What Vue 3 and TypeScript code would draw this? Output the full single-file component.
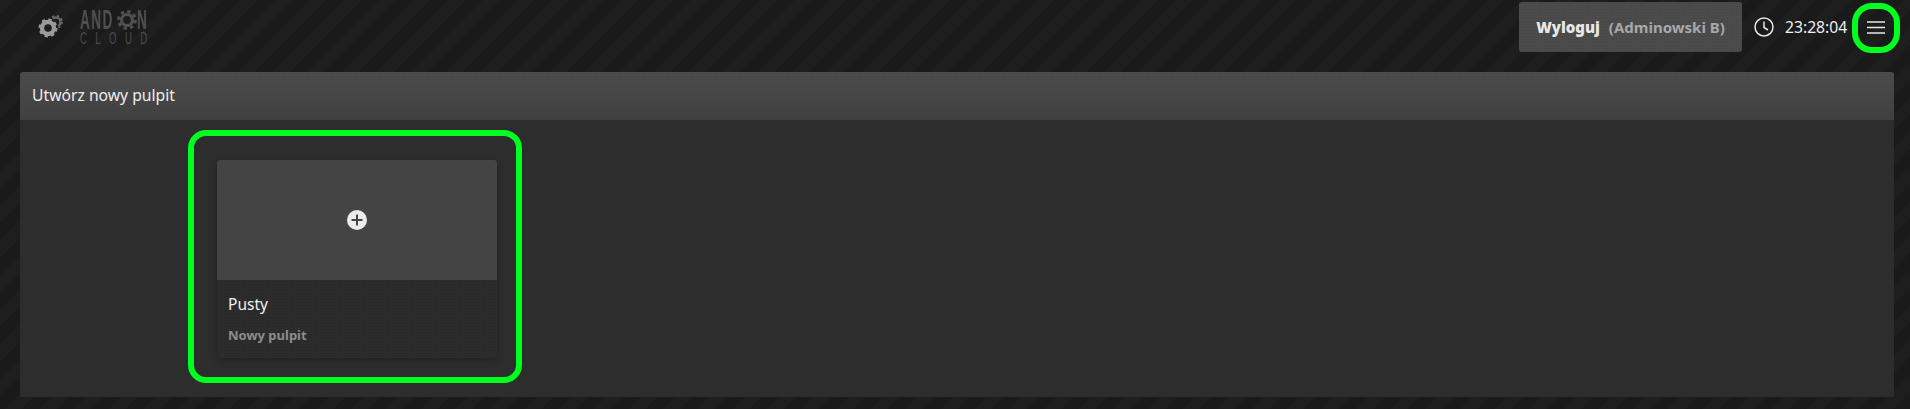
<template>
  <div class="page">
    <header class="topbar">
      <div class="brand">
        <svg class="gears" viewBox="0 0 26 26" width="26" height="26">
          <g fill="none" stroke="#666">
            <circle cx="18" cy="8" r="4.500" stroke-width="2.500" />
            <circle cx="18" cy="8" r="6.200" stroke-width="1.600" stroke-dasharray="2.400 2.470" />
          </g>
          <circle cx="10" cy="14" r="10.500" fill="#1c1c1c" />
          <g fill="none" stroke="#9a9a9a">
            <circle cx="10" cy="14" r="6" stroke-width="4.400" />
            <circle cx="10" cy="14" r="8.300" stroke-width="2.400" stroke-dasharray="3.260 3.260" />
          </g>
        </svg>
        <div class="logo">
          <div class="logo-top">
            <span class="logo-word logo-and">AND</span>
            <svg class="logo-gear" viewBox="0 0 20 20" width="20" height="20">
              <circle cx="10" cy="10" r="5.500" fill="none" stroke="#505050" stroke-width="3.200" />
              <circle cx="10" cy="10" r="8.400" fill="none" stroke="#505050" stroke-width="3" stroke-dasharray="3.300 3.300" />
            </svg>
            <span class="logo-word logo-n">N</span>
          </div>
          <div class="logo-sub">CLOUD</div>
        </div>
      </div>
      <div class="actions">
        <button class="logout" type="button">
          <b>Wyloguj</b>
          <span>({{ user }})</span>
        </button>
        <svg class="clock" viewBox="0 0 20 20" width="20" height="20">
          <circle cx="10" cy="10" r="9" fill="none" stroke="#e6e6e6" stroke-width="1.500" />
          <path d="M10 4.500V10.500L14 13" fill="none" stroke="#e6e6e6" stroke-width="1.500" />
        </svg>
        <span class="time">{{ time }}</span>
        <div class="menu">
          <svg viewBox="0 0 18 13" width="18" height="13">
            <path d="M0 1h18M0 6.500h18M0 12h18" stroke="#e6e6e6" stroke-width="1.600" />
          </svg>
          <span class="ring ring-menu"></span>
        </div>
      </div>
    </header>

    <section class="panel">
      <div class="panel-head">Utwórz nowy pulpit</div>
      <div class="panel-body">
        <article v-for="tpl in templates" :key="tpl.title" class="card">
          <span class="ring ring-card"></span>
          <div class="thumb">
            <svg viewBox="0 0 20 20" width="20" height="20">
              <circle cx="10" cy="10" r="10" fill="#ececec" />
              <path d="M10 4.500v11M4.500 10h11" stroke="#444" stroke-width="2" />
            </svg>
          </div>
          <div class="card-body">
            <div class="card-title">{{ tpl.title }}</div>
            <div class="card-sub">{{ tpl.sub }}</div>
          </div>
        </article>
      </div>
    </section>
  </div>
</template>

<script setup lang="ts">
const user = 'Adminowski B'
const time = '23:28:04'
const templates = [{ title: 'Pusty', sub: 'Nowy pulpit' }]
</script>

<style>
html,
body {
  margin: 0;
  background: #1a1a1a;
}
</style>

<style scoped>
.page {
  height: 409px;
  overflow: hidden;
  font-family: "Noto Sans", "Open Sans", sans-serif;
  color: #eee;
  background: repeating-linear-gradient(-45deg, #1a1a1a 0 12px, #1e1e1e 12.500px 24px, #1a1a1a 24.500px);
}

.topbar {
  height: 72px;
  padding-right: 10px;
  display: flex;
  justify-content: space-between;
  align-items: flex-start;
}

.brand {
  display: flex;
  align-items: flex-start;
  padding: 14px 0 0 38px;
  gap: 16px;
}

.logo {
  width: 70px;
  margin-top: -4px;
}

.logo-top {
  display: flex;
  align-items: center;
  height: 20px;
}

.logo-word {
  font-family: "Liberation Sans", sans-serif;
  font-weight: 700;
  font-size: 27px;
  line-height: 20px;
  letter-spacing: 3px;
  color: #505050;
  display: inline-block;
  transform: scaleX(0.5);
  transform-origin: left center;
}

.logo-and {
  width: 37px;
}

.logo-n {
  width: 11px;
}

.logo-gear {
  flex: none;
}

.logo-sub {
  font-family: "Liberation Sans", sans-serif;
  font-size: 16px;
  letter-spacing: 14px;
  color: #4c4c4c;
  transform: scaleX(0.6);
  transform-origin: left center;
  white-space: nowrap;
  line-height: 16px;
  margin-top: 1px;
}

.actions {
  display: flex;
  align-items: center;
  height: 54px;
}

.logout {
  width: 223px;
  height: 50px;
  border: 0;
  border-radius: 3px;
  background: radial-gradient(#444 0.6px, transparent 0.7px) 0 0 / 3px 3px, #4b4b4b;
  color: #e8e8e8;
  font: 700 15px "Noto Sans", sans-serif;
  display: flex;
  justify-content: center;
  align-items: center;
  gap: 9px;
}

.logout span {
  color: #a8a8a8;
}

.clock {
  margin-left: 12px;
}

.time {
  margin-left: 11px;
  font-size: 15.700px;
  width: 67px;
}

.menu {
  position: relative;
  width: 48px;
  height: 50px;
  display: flex;
  justify-content: center;
  align-items: center;
}

.ring {
  position: absolute;
  box-sizing: border-box;
  border: 6px solid #00ff1e;
  pointer-events: none;
}

.ring-menu {
  inset: 1px 0 -1px;
  border-radius: 20px;
}

.ring-card {
  left: -29px;
  top: -30px;
  right: -25px;
  bottom: -25px;
  border-radius: 18px;
}

.panel {
  margin: 0 16px 0 20px;
  height: 325px;
  border-radius: 3px 3px 0 0;
  background: #2d2d2d;
}

.panel-head {
  height: 48px;
  box-sizing: border-box;
  padding: 13px 12px;
  font-size: 15.700px;
  line-height: 20px;
  border-radius: 3px 3px 0 0;
  background: radial-gradient(#444 0.6px, transparent 0.7px) 0 0 / 3px 3px, linear-gradient(#4c4c4c, #404040);
}

.panel-body {
  padding: 40px 0 0 197px;
}

.card {
  position: relative;
  width: 280px;
  border-radius: 3px;
  background: radial-gradient(#262626 0.6px, transparent 0.7px) 0 0 / 3px 3px, #2c2c2c;
  box-shadow: 0 2px 6px rgba(0, 0, 0, 0.3);
}

.thumb {
  height: 120px;
  border-radius: 3px 3px 0 0;
  background: #444;
  display: flex;
  justify-content: center;
  align-items: center;
}

.card-body {
  height: 78px;
  box-sizing: border-box;
  padding: 14px 11px 0;
}

.card-title {
  font-size: 15.500px;
  line-height: 20px;
}

.card-sub {
  margin-top: 11px;
  font-size: 13px;
  font-weight: 700;
  line-height: 20px;
  color: #8c8c8c;
}
</style>
